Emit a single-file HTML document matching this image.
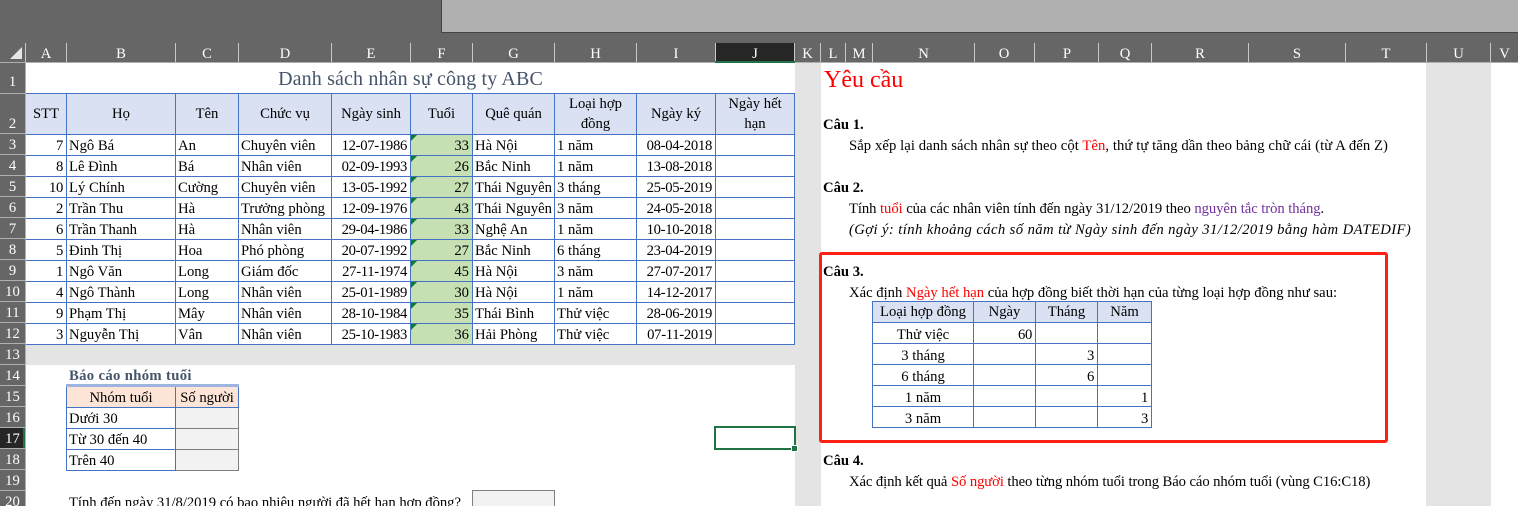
<!DOCTYPE html>
<html><head><meta charset="utf-8">
<style>
html{margin:0;padding:0;width:1518px;height:506px;overflow:hidden}
body{margin:0;padding:0;width:1518px;height:506px;overflow:hidden;position:relative;background:#fff;font-family:"Liberation Serif","Noto Serif CJK SC",serif;font-size:14.67px;color:#000}
div{position:absolute;white-space:nowrap;box-sizing:border-box}
.ch{top:43px;height:19px;line-height:23px;text-align:center;color:#fff;font-size:14.67px;border-right:1px solid #c8c8c8}
.rh{left:0;width:25px;height:21px;line-height:23px;text-align:center;color:#fff;font-size:14.67px}
.rl{left:0;width:25px;height:1px;background:#b0b0b0}
.t{height:21px;line-height:21px}
table{position:absolute;border-collapse:separate;border-spacing:0;table-layout:fixed;font-size:14.67px}
td{box-sizing:border-box;border-right:1px solid #4472c4;border-bottom:1px solid #4472c4;padding:2px 2px 0;height:21px;line-height:18px;white-space:nowrap;overflow:hidden}
tr.h td{background:#d9e1f2;text-align:center;white-space:normal;border-top:1px solid #4472c4;padding:0 1px;line-height:20px}
td.n{text-align:right;padding-right:3px;letter-spacing:-.3px}
td.a{background:#c6e0b4;position:relative;text-align:right;padding-right:3px}
td.a:before{content:"";position:absolute;left:0;top:0;border-top:6px solid #0a7d2c;border-right:6px solid transparent}
td.c{text-align:center}
.rt td{padding-top:4px;line-height:16px}
.rt tr.h td{padding-top:1px;line-height:19px}
.r{color:#ff0000}
</style></head><body>
<div style="left:0;top:0;width:1518px;height:63px;background:#666"></div>
<div style="left:0;top:63px;width:25px;height:443px;background:#666"></div>
<div style="left:441px;top:0;width:1077px;height:33px;background:#b0b0b0;border-left:1px solid #444;border-bottom:1px solid #444"></div>
<svg style="position:absolute;left:0;top:43px" width="26" height="20"><path d="M10 16L22 16L22 4Z" fill="#e6e6e6"/><path d="M25.5 0V20" stroke="#c8c8c8"/></svg>
<div class="ch" style="left:26px;width:41px">A</div>
<div class="ch" style="left:67px;width:109px">B</div>
<div class="ch" style="left:176px;width:63px">C</div>
<div class="ch" style="left:239px;width:93px">D</div>
<div class="ch" style="left:332px;width:79px">E</div>
<div class="ch" style="left:411px;width:62px">F</div>
<div class="ch" style="left:473px;width:82px">G</div>
<div class="ch" style="left:555px;width:82px">H</div>
<div class="ch" style="left:637px;width:79px">I</div>
<div class="ch" style="left:716px;width:79px;background:#262626">J</div>
<div class="ch" style="left:795px;width:26px">K</div>
<div class="ch" style="left:821px;width:25px">L</div>
<div class="ch" style="left:846px;width:27px">M</div>
<div class="ch" style="left:873px;width:102px">N</div>
<div class="ch" style="left:974px;width:61px">O</div>
<div class="ch" style="left:1036px;width:63px">P</div>
<div class="ch" style="left:1099px;width:53px">Q</div>
<div class="ch" style="left:1152px;width:97px">R</div>
<div class="ch" style="left:1249px;width:97px">S</div>
<div class="ch" style="left:1346px;width:81px">T</div>
<div class="ch" style="left:1427px;width:64px">U</div>
<div class="ch" style="left:1491px;width:27px;border-right:0">V</div>
<div style="left:0;top:62px;width:1518px;height:1px;background:#b0b0b0"></div>
<div style="left:715px;top:61px;width:80px;height:2px;background:#217346"></div>

<div class="rh" style="top:71px">1</div><div class="rl" style="top:93px"></div>
<div class="rh" style="top:113px">2</div><div class="rl" style="top:133px"></div>
<div class="rh" style="top:134px">3</div><div class="rl" style="top:154px"></div>
<div class="rh" style="top:155px">4</div><div class="rl" style="top:175px"></div>
<div class="rh" style="top:176px">5</div><div class="rl" style="top:196px"></div>
<div class="rh" style="top:197px">6</div><div class="rl" style="top:217px"></div>
<div class="rh" style="top:218px">7</div><div class="rl" style="top:238px"></div>
<div class="rh" style="top:239px">8</div><div class="rl" style="top:259px"></div>
<div class="rh" style="top:260px">9</div><div class="rl" style="top:280px"></div>
<div class="rh" style="top:281px">10</div><div class="rl" style="top:301px"></div>
<div class="rh" style="top:302px">11</div><div class="rl" style="top:322px"></div>
<div class="rh" style="top:323px">12</div><div class="rl" style="top:343px"></div>
<div class="rh" style="top:344px">13</div><div class="rl" style="top:364px"></div>
<div class="rh" style="top:365px">14</div><div class="rl" style="top:385px"></div>
<div class="rh" style="top:386px">15</div><div class="rl" style="top:406px"></div>
<div class="rh" style="top:407px">16</div><div class="rl" style="top:427px"></div>
<div style="left:0;top:428px;width:25px;height:20px;background:#262626;border-right:2px solid #217346"></div>
<div class="rh" style="top:428px">17</div><div class="rl" style="top:448px"></div>
<div class="rh" style="top:449px">18</div><div class="rl" style="top:469px"></div>
<div class="rh" style="top:470px">19</div><div class="rl" style="top:490px"></div>
<div class="rh" style="top:491px">20</div>
<div style="left:25px;top:63px;width:1px;height:443px;background:#b0b0b0"></div>

<!-- gray bands -->
<div style="left:795px;top:63px;width:26px;height:443px;background:#e4e4e4"></div>
<div style="left:1426px;top:63px;width:65px;height:443px;background:#e4e4e4"></div>
<div style="left:26px;top:344px;width:769px;height:21px;background:#e4e4e4"></div>

<div style="left:26px;top:63px;width:769px;height:30px;line-height:33px;text-align:center;font-size:20px;letter-spacing:.14px;color:#44546a">Danh sách nhân sự công ty ABC</div>

<table style="left:26px;top:93px;width:769px">
<colgroup><col style="width:41px"><col style="width:109px"><col style="width:63px"><col style="width:93px"><col style="width:79px"><col style="width:62px"><col style="width:82px"><col style="width:82px"><col style="width:79px"><col style="width:79px"></colgroup>
<tr class="h"><td style="height:41px">STT</td><td style="height:41px">Họ</td><td>Tên</td><td>Chức vụ</td><td>Ngày sinh</td><td>Tuổi</td><td>Quê quán</td><td>Loại hợp đồng</td><td>Ngày ký</td><td>Ngày hết hạn</td></tr>
<tr><td class="n">7</td><td>Ngô Bá</td><td>An</td><td>Chuyên viên</td><td class="n">12-07-1986</td><td class="a">33</td><td>Hà Nội</td><td>1 năm</td><td class="n">08-04-2018</td><td></td></tr>
<tr><td class="n">8</td><td>Lê Đình</td><td>Bá</td><td>Nhân viên</td><td class="n">02-09-1993</td><td class="a">26</td><td>Bắc Ninh</td><td>1 năm</td><td class="n">13-08-2018</td><td></td></tr>
<tr><td class="n">10</td><td>Lý Chính</td><td>Cường</td><td>Chuyên viên</td><td class="n">13-05-1992</td><td class="a">27</td><td>Thái Nguyên</td><td>3 tháng</td><td class="n">25-05-2019</td><td></td></tr>
<tr><td class="n">2</td><td>Trần Thu</td><td>Hà</td><td>Trưởng phòng</td><td class="n">12-09-1976</td><td class="a">43</td><td>Thái Nguyên</td><td>3 năm</td><td class="n">24-05-2018</td><td></td></tr>
<tr><td class="n">6</td><td>Trần Thanh</td><td>Hà</td><td>Nhân viên</td><td class="n">29-04-1986</td><td class="a">33</td><td>Nghệ An</td><td>1 năm</td><td class="n">10-10-2018</td><td></td></tr>
<tr><td class="n">5</td><td>Đinh Thị</td><td>Hoa</td><td>Phó phòng</td><td class="n">20-07-1992</td><td class="a">27</td><td>Bắc Ninh</td><td>6 tháng</td><td class="n">23-04-2019</td><td></td></tr>
<tr><td class="n">1</td><td>Ngô Văn</td><td>Long</td><td>Giám đốc</td><td class="n">27-11-1974</td><td class="a">45</td><td>Hà Nội</td><td>3 năm</td><td class="n">27-07-2017</td><td></td></tr>
<tr><td class="n">4</td><td>Ngô Thành</td><td>Long</td><td>Nhân viên</td><td class="n">25-01-1989</td><td class="a">30</td><td>Hà Nội</td><td>1 năm</td><td class="n">14-12-2017</td><td></td></tr>
<tr><td class="n">9</td><td>Phạm Thị</td><td>Mây</td><td>Nhân viên</td><td class="n">28-10-1984</td><td class="a">35</td><td>Thái Bình</td><td>Thử việc</td><td class="n">28-06-2019</td><td></td></tr>
<tr><td class="n">3</td><td>Nguyễn Thị</td><td>Vân</td><td>Nhân viên</td><td class="n">25-10-1983</td><td class="a">36</td><td>Hải Phòng</td><td>Thử việc</td><td class="n">07-11-2019</td><td></td></tr>
</table>

<!-- report -->
<div class="t" style="left:69px;top:366px;font-weight:bold;letter-spacing:.35px;color:#44546a">Báo cáo nhóm tuổi</div>
<div style="left:66px;top:384px;width:173px;height:3px;background:#9db4e0"></div>
<table style="left:66px;top:387px;width:173px;border-left:1px solid #4472c4">
<colgroup><col style="width:109px"><col style="width:63px"></colgroup>
<tr><td class="c" style="height:20px;background:#fce4d6;padding-top:1px">Nhóm tuổi</td><td class="c" style="background:#fce4d6;padding:1px 0 0">Số người</td></tr>
<tr><td>Dưới 30</td><td style="background:#f2f2f2;border-color:#7f7f7f"></td></tr>
<tr><td>Từ 30 đến 40</td><td style="background:#f2f2f2;border-color:#7f7f7f"></td></tr>
<tr><td>Trên 40</td><td style="background:#f2f2f2;border-color:#7f7f7f"></td></tr>
</table>
<div class="t" style="left:69px;top:493px;letter-spacing:-.03px">Tính đến ngày 31/8/2019 có bao nhiêu người đã hết hạn hợp đồng?</div>
<div style="left:472px;top:490px;width:83px;height:30px;background:#f2f2f2;border:1px solid #7f7f7f"></div>

<!-- selected cell -->
<div style="left:714px;top:426px;width:82px;height:24px;border:2px solid #217346"></div>
<div style="left:792px;top:446px;width:5px;height:5px;background:#217346;outline:1px solid #fff"></div>

<!-- right panel -->
<div style="left:824px;top:64px;height:32px;line-height:32px;font-size:24px;color:#ff0000">Yêu cầu</div>
<div class="t" style="left:823px;top:115px;font-weight:bold">Câu 1.</div>
<div class="t" style="left:849px;top:136px;letter-spacing:.078px">Sắp xếp lại danh sách nhân sự theo cột <span class="r">Tên</span>, thứ tự tăng dần theo bảng chữ cái (từ A đến Z)</div>
<div class="t" style="left:823px;top:178px;font-weight:bold">Câu 2.</div>
<div class="t" style="left:849px;top:199px;letter-spacing:-.06px">Tính <span class="r">tuổi</span> của các nhân viên tính đến ngày 31/12/2019 theo <span style="color:#7030a0">nguyên tắc tròn tháng</span>.</div>
<div class="t" style="left:849px;top:220px;font-style:italic;letter-spacing:.4px">(Gợi ý: tính khoảng cách số năm từ Ngày sinh đến ngày 31/12/2019 bằng hàm DATEDIF)</div>
<div class="t" style="left:823px;top:262px;font-weight:bold">Câu 3.</div>
<div class="t" style="left:849px;top:283px">Xác định <span class="r">Ngày hết hạn</span> của hợp đồng biết thời hạn của từng loại hợp đồng như sau:</div>
<table class="rt" style="left:872px;top:301px;width:280px;border-left:1px solid #4472c4">
<colgroup><col style="width:101px"><col style="width:62px"><col style="width:62px"><col style="width:54px"></colgroup>
<tr class="h"><td style="height:22px">Loại hợp đồng</td><td>Ngày</td><td>Tháng</td><td>Năm</td></tr>
<tr><td class="c">Thử việc</td><td class="n">60</td><td></td><td></td></tr>
<tr><td class="c">3 tháng</td><td></td><td class="n">3</td><td></td></tr>
<tr><td class="c">6 tháng</td><td></td><td class="n">6</td><td></td></tr>
<tr><td class="c">1 năm</td><td></td><td></td><td class="n">1</td></tr>
<tr><td class="c">3 năm</td><td></td><td></td><td class="n">3</td></tr>
</table>
<div style="left:819px;top:252px;width:569px;height:191px;border:3px solid #ff2015;border-radius:3px"></div>
<div class="t" style="left:823px;top:451px;font-weight:bold">Câu 4.</div>
<div class="t" style="left:849px;top:472px;letter-spacing:-.085px">Xác định kết quả <span class="r">Số người</span> theo từng nhóm tuổi trong Báo cáo nhóm tuổi (vùng C16:C18)</div>
</body></html>
